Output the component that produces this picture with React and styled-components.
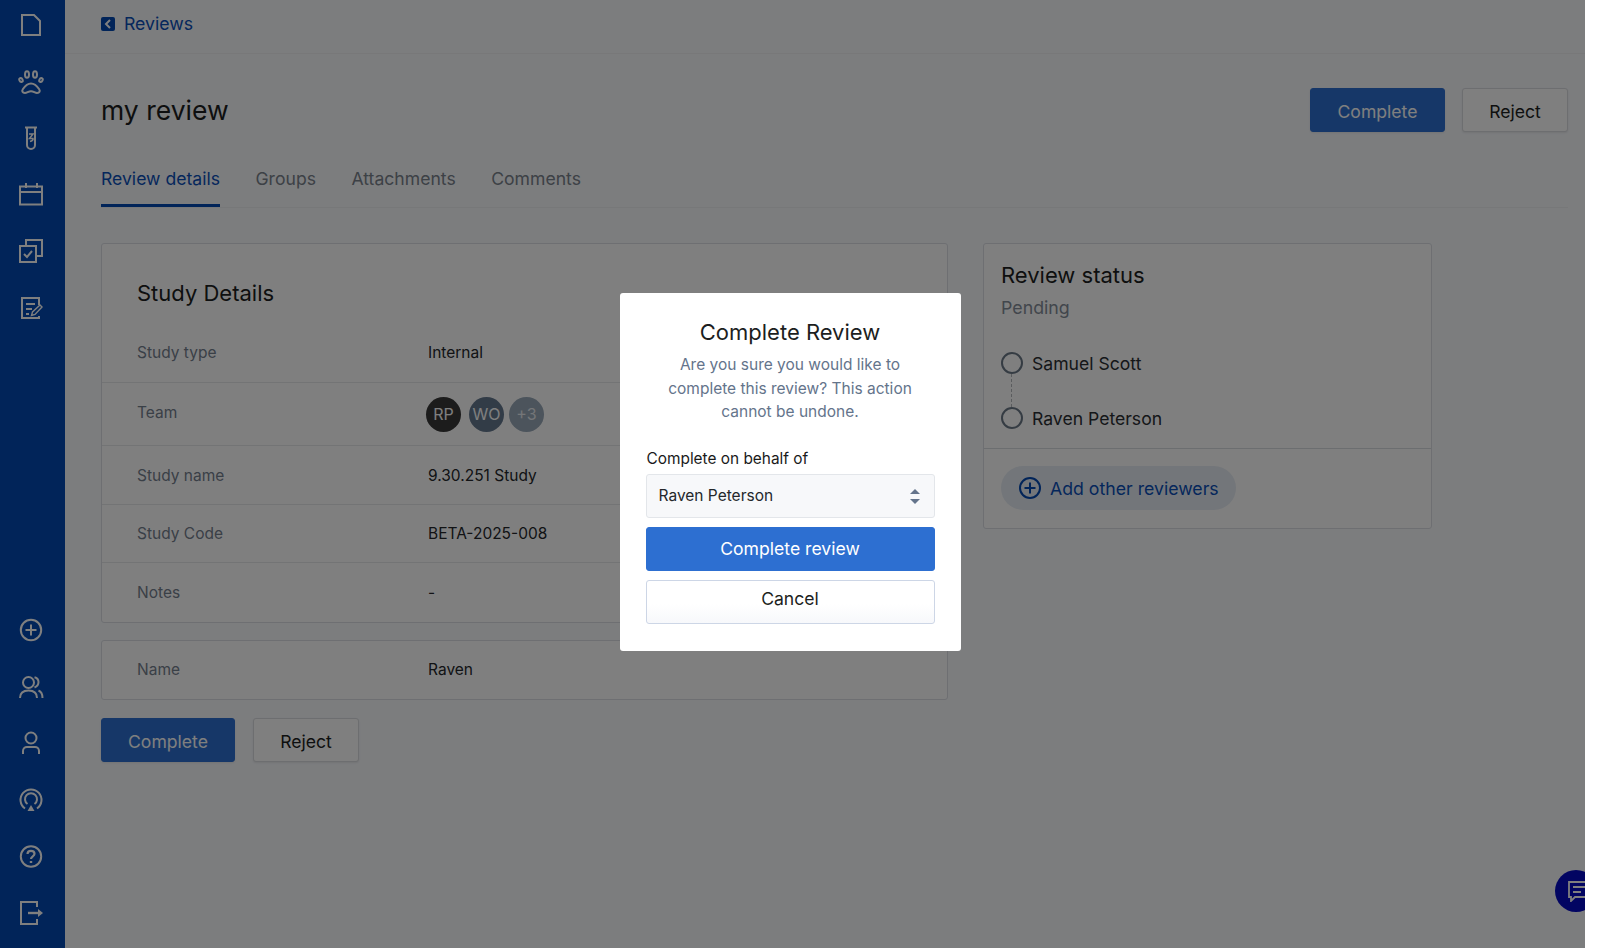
import React from 'react';
import styled, { createGlobalStyle } from 'styled-components';

const GlobalStyle = createGlobalStyle`
  html, body {
    margin: 0;
    padding: 0;
    height: 100%;
    overflow: hidden;
    background: #ffffff;
    font-family: 'Inter', 'Liberation Sans', sans-serif;
  }
  * {
    box-sizing: border-box;
  }
`;

const Shell = styled.div`
  position: relative;
  display: flex;
  width: 1585px;
  height: 948px;
  overflow: hidden;
  background: #f8fafd;
`;

const Sidebar = styled.nav`
  display: flex;
  flex-direction: column;
  justify-content: space-between;
  flex: 0 0 65px;
  padding: 13px 3px 23px 0;
  background: #0248b2;
`;

const NavGroup = styled.div`
  display: flex;
  flex-direction: column;
  align-items: center;
  gap: 32.5px;
`;

const NavIcon = styled.svg.attrs({ viewBox: '0 0 24 24', fill: 'none' })`
  display: block;
  width: 24px;
  height: 24px;
  color: #ffffff;
  stroke: currentColor;
  stroke-width: 2;
  overflow: visible;
`;

const Main = styled.main`
  flex: 1;
  min-width: 0;
`;

const TopBar = styled.div`
  display: flex;
  align-items: center;
  gap: 9px;
  height: 54px;
  padding: 0 0 6px 36px;
  border-bottom: 1px solid #f0f1f3;
  color: #0a4fb8;
  font-size: 17.7px;
`;

const BackIcon = styled.span`
  display: flex;
  align-items: center;
  justify-content: center;
  width: 14px;
  height: 14px;
  border-radius: 2px;
  background: #0248b2;
`;

const Content = styled.div`
  padding: 0 17px 0 36px;
`;

const TitleRow = styled.div`
  display: flex;
  align-items: center;
  justify-content: space-between;
  margin-top: 34px;
  height: 44px;
`;

const PageTitle = styled.h1`
  margin: 0;
  font-size: 26.5px;
  font-weight: 400;
  color: #1c1e21;
`;

const Actions = styled.div`
  display: flex;
  gap: 17px;
`;

const ActionButton = styled.button`
  width: ${(p) => p.$width}px;
  height: 44px;
  padding: 2px 0 0;
  border-radius: 3px;
  border: 1px solid ${(p) => (p.$primary ? '#2d6fd1' : '#dadce0')};
  background: ${(p) => (p.$primary ? '#2d6fd1' : '#ffffff')};
  color: ${(p) => (p.$primary ? '#ffffff' : '#1c1e21')};
  font-family: inherit;
  font-size: 17.6px;
  box-shadow: 0 1px 2px rgba(0, 0, 0, 0.08);
`;

const Tabs = styled.div`
  display: flex;
  gap: 35.5px;
  margin-top: 36px;
  border-bottom: 1px solid #eef0f2;
`;

const Tab = styled.div`
  height: 39px;
  line-height: 22px;
  font-size: 17.6px;
  color: ${(p) => (p.$active ? '#0a4fb8' : '#7a828c')};
  border-bottom: 3px solid ${(p) => (p.$active ? '#0248b2' : 'transparent')};
`;

const Columns = styled.div`
  display: grid;
  grid-template-columns: 847px 449px;
  gap: 35px;
  align-items: start;
  margin-top: 35px;
`;

const LeftColumn = styled.div`
  display: flex;
  flex-direction: column;
`;

const Card = styled.section`
  background: #ffffff;
  border: 1px solid #dcdfe4;
  border-radius: 3px;
`;

const CardHeading = styled.h2`
  margin: 0;
  padding: 34px 35px 0;
  height: 79px;
  font-size: 22px;
  line-height: 31px;
  font-weight: 400;
  color: #1c1e21;
`;

const DetailRow = styled.div`
  display: grid;
  grid-template-columns: 291px 1fr;
  align-items: center;
  height: ${(p) => p.$height}px;
  padding: 0 0 ${(p) => p.$lift || 0}px 35px;
  border-bottom: ${(p) => (p.$last ? 'none' : '1px solid #e6e8eb')};
  font-size: 15.5px;
`;

const Label = styled.div`
  color: #75808e;
`;

const TeamLabel = styled(Label)`
  margin-top: -4px;
`;

const Value = styled.div`
  color: #24272b;
`;

const Avatars = styled.div`
  display: flex;
  margin-left: -2px;
`;

const Avatar = styled.div`
  display: flex;
  align-items: center;
  justify-content: center;
  width: 35px;
  height: 35px;
  margin-right: ${(p) => p.$gap}px;
  border-radius: 50%;
  background: ${(p) => p.$color};
  color: ${(p) => (p.$muted ? '#e8ecf0' : '#ffffff')};
  font-size: 16px;
`;

const NameCard = styled(Card)`
  margin-top: 17px;
`;

const BottomActions = styled(Actions)`
  margin-top: 18px;
  gap: 18px;
`;

const StatusTop = styled.div`
  padding: 15px 17px 0;
  height: 205px;
  border-bottom: 1px solid #d9dce0;
`;

const StatusTitle = styled.h2`
  margin: 0;
  font-size: 22px;
  line-height: 32px;
  font-weight: 400;
  color: #1c1e21;
`;

const StatusText = styled.div`
  margin-top: 4px;
  font-size: 17.8px;
  line-height: 26px;
  color: #848d99;
`;

const ReviewerList = styled.div`
  display: flex;
  flex-direction: column;
  gap: 33px;
  margin-top: 31px;
`;

const Reviewer = styled.div`
  position: relative;
  display: flex;
  align-items: center;
  gap: 9px;
  height: 22px;
  font-size: 17.6px;
  color: #2b2e33;
`;

const Ring = styled.span`
  width: 22px;
  height: 22px;
  border-radius: 50%;
  border: 2px solid #6b7887;
`;

const Connector = styled.span`
  position: absolute;
  left: 10px;
  top: 22px;
  height: 33px;
  border-left: 1px dashed #b5b8bd;
`;

const StatusFooter = styled.div`
  padding: 17px 17px 18px;
`;

const AddPill = styled.div`
  display: flex;
  align-items: center;
  gap: 9px;
  width: 235px;
  height: 44px;
  padding-left: 18px;
  border-radius: 22px;
  background: #e7edf4;
  color: #0a4fb8;
  font-size: 17.7px;
`;

const ChatBubble = styled.div`
  position: absolute;
  left: 1555px;
  top: 870px;
  display: flex;
  align-items: center;
  padding: 1px 0 0 13px;
  width: 42px;
  height: 42px;
  border-radius: 50%;
  background: #050bc4;
`;

const Overlay = styled.div`
  position: absolute;
  inset: 0;
  display: flex;
  align-items: center;
  justify-content: center;
  padding: 0 5px 4px 0;
  background: rgba(0, 0, 0, 0.5);
`;

const Modal = styled.div`
  width: 341px;
  height: 358px;
  padding: 24px 26px 0;
  border-radius: 3px;
  background: #ffffff;
`;

const ModalTitle = styled.h3`
  margin: 0;
  font-size: 22px;
  line-height: 30px;
  font-weight: 400;
  text-align: center;
  color: #1c1e21;
`;

const ModalText = styled.p`
  margin: 6px 0 0;
  font-size: 15.5px;
  line-height: 23.5px;
  text-align: center;
  color: #64748b;
`;

const FieldLabel = styled.div`
  margin-top: 24px;
  padding-left: 1px;
  font-size: 15.4px;
  line-height: 22px;
  color: #1a1a1a;
`;

const SelectBox = styled.div`
  display: flex;
  align-items: center;
  justify-content: space-between;
  height: 44px;
  margin-top: 4px;
  padding: 0 13px 0 12px;
  border: 1px solid #e3e6ea;
  border-radius: 3px;
  background: #f7f8fa;
  font-size: 15.5px;
  color: #24272b;
`;

const ModalButton = styled.button`
  display: block;
  width: 100%;
  height: 44px;
  margin-top: 9px;
  padding: 0 0 ${(p) => (p.$primary ? 0 : 6)}px;
  border-radius: 3px;
  border: 1px solid ${(p) => (p.$primary ? '#2d6fd1' : '#cdd6e6')};
  background: ${(p) => (p.$primary ? '#2d6fd1' : 'linear-gradient(#ffffff 55%, #f7f8fb)')};
  color: ${(p) => (p.$primary ? '#ffffff' : '#1c1e21')};
  font-family: inherit;
  font-size: 17.6px;
`;

const ArrowIcon = styled.svg`
  display: block;
  width: 12px;
  height: 18px;
  fill: #64748b;
`;

const topNav = [
  <path key="file" d="M3 2H15L21 8V22H3Z" />,
  <g key="paw">
    <path d="M6 23C3.5 23 2.5 21.2 3.8 19.2C6 16 9 13.5 12 13.5C15 13.5 18 16 20.2 19.2C21.5 21.2 20.5 23 18 23C16 23 14.5 21.2 12 21.2C9.5 21.2 8 23 6 23Z" />
    <ellipse cx="8" cy="4.5" rx="2" ry="3.3" />
    <ellipse cx="16" cy="4.5" rx="2" ry="3.3" />
    <ellipse cx="2" cy="10" rx="1.6" ry="2.1" transform="rotate(-25 2 10)" />
    <ellipse cx="22" cy="10" rx="1.6" ry="2.1" transform="rotate(25 22 10)" />
  </g>,
  <g key="tube">
    <path d="M6 1.5H18M8 1.5V19A4 4 0 0 0 16 19V1.5" />
    <path d="M10 8H14L10.5 12.5H14C14.5 14 13 15 11 15.5" strokeWidth="1.5" />
  </g>,
  <g key="calendar">
    <path d="M1 3.5H23V21.5H1Z" />
    <path d="M1 9H23M7 0V5M18 0V5" />
  </g>,
  <g key="copy">
    <path d="M7 6V1H23V17H17" />
    <path d="M1 7H17V23H1Z" />
    <path d="M5 15L8 18L13 12" />
  </g>,
  <g key="note">
    <path d="M20 9V2H3V22H20V20" />
    <path d="M7 8H16M7 13H13M7 18H10" />
    <path d="M12.5 19.5L13.5 16L21 9L23 11L16 18.5Z" strokeWidth="1.4" />
  </g>,
];

const bottomNav = [
  <g key="plus">
    <circle cx="12" cy="11" r="10.2" />
    <path d="M12 5.5V16.5M6.5 11H17.5" />
  </g>,
  <g key="users">
    <circle cx="9.5" cy="7.5" r="5.5" />
    <path d="M1 23C1 18 4.5 15.5 9.5 15.5C14.5 15.5 18 18 18 23" />
    <path d="M15.5 2.2C18.5 3 19.5 5 19.5 7C19.5 9 18 11.5 15.5 12.5M19.5 15.5C22 16.5 23.5 19.5 23.5 23" />
  </g>,
  <g key="user">
    <circle cx="12" cy="6" r="5.5" />
    <path d="M4 22V19C4 16.5 6 15 8 15H16C18 15 20 16.5 20 19V22" />
  </g>,
  <g key="hub">
    <path d="M6 20.5A10.5 10.5 0 1 1 18 20.5" />
    <path d="M8.5 16A6 6 0 1 1 15.5 16" />
    <path d="M12 17L15.5 23H8.5Z" fill="currentColor" stroke="none" />
  </g>,
  <g key="help">
    <circle cx="12" cy="11.5" r="10.2" />
    <path d="M8.5 9C8.5 7 10 5.8 12 5.8C14 5.8 15.5 7 15.5 8.8C15.5 11.3 12 11.3 12 14" strokeWidth="2.2" />
    <path d="M12 16V18" strokeWidth="2.4" />
  </g>,
  <g key="logout">
    <path d="M18 6V1H2V23H18V18" />
    <path d="M9 12H19" strokeWidth="2.4" />
    <path d="M19 8L24 12L19 16Z" fill="currentColor" stroke="none" />
  </g>,
];

const details = [
  { label: 'Study type', value: 'Internal', height: 60 },
  { label: 'Team', height: 63 },
  { label: 'Study name', value: '9.30.251 Study', height: 59 },
  { label: 'Study Code', value: 'BETA-2025-008', height: 58 },
  { label: 'Notes', value: '-', height: 59, last: true },
];

const TeamAvatars = () => (
  <Avatars>
    <Avatar $color="#383838" $gap={8}>RP</Avatar>
    <Avatar $color="#64788f" $gap={5}>WO</Avatar>
    <Avatar $color="#98a8b8" $gap={0} $muted>+3</Avatar>
  </Avatars>
);

const App = () => (
  <>
    <GlobalStyle />
    <Shell>
      <Sidebar>
        <NavGroup>
          {topNav.map((icon) => (
            <NavIcon key={icon.key}>{icon}</NavIcon>
          ))}
        </NavGroup>
        <NavGroup>
          {bottomNav.map((icon) => (
            <NavIcon key={icon.key}>{icon}</NavIcon>
          ))}
        </NavGroup>
      </Sidebar>

      <Main>
        <TopBar>
          <BackIcon>
            <svg width="8" height="10" viewBox="0 0 8 10" fill="none" stroke="#ffffff" strokeWidth="2">
              <path d="M6 1L2 5L6 9" />
            </svg>
          </BackIcon>
          Reviews
        </TopBar>
        <Content>
          <TitleRow>
            <PageTitle>my review</PageTitle>
            <Actions>
              <ActionButton $primary $width={135}>Complete</ActionButton>
              <ActionButton $width={106}>Reject</ActionButton>
            </Actions>
          </TitleRow>

          <Tabs>
            <Tab $active>Review details</Tab>
            <Tab>Groups</Tab>
            <Tab>Attachments</Tab>
            <Tab>Comments</Tab>
          </Tabs>

          <Columns>
            <LeftColumn>
              <Card>
                <CardHeading>Study Details</CardHeading>
                {details.map((row) => (
                  <DetailRow key={row.label} $height={row.height} $last={row.last}>
                    {row.value ? <Label>{row.label}</Label> : <TeamLabel>{row.label}</TeamLabel>}
                    {row.value ? <Value>{row.value}</Value> : <TeamAvatars />}
                  </DetailRow>
                ))}
              </Card>
              <NameCard>
                <DetailRow $height={58} $lift={2} $last>
                  <Label>Name</Label>
                  <Value>Raven</Value>
                </DetailRow>
              </NameCard>
              <BottomActions>
                <ActionButton $primary $width={134}>Complete</ActionButton>
                <ActionButton $width={106}>Reject</ActionButton>
              </BottomActions>
            </LeftColumn>

            <Card>
              <StatusTop>
                <StatusTitle>Review status</StatusTitle>
                <StatusText>Pending</StatusText>
                <ReviewerList>
                  <Reviewer>
                    <Ring />
                    <Connector />
                    Samuel Scott
                  </Reviewer>
                  <Reviewer>
                    <Ring />
                    Raven Peterson
                  </Reviewer>
                </ReviewerList>
              </StatusTop>
              <StatusFooter>
                <AddPill>
                  <svg width="22" height="22" viewBox="0 0 22 22" fill="none" stroke="#0248b2" strokeWidth="2">
                    <circle cx="11" cy="11" r="10" />
                    <path d="M11 5.5V16.5M5.5 11H16.5" />
                  </svg>
                  Add other reviewers
                </AddPill>
              </StatusFooter>
            </Card>
          </Columns>
        </Content>
      </Main>

      <ChatBubble>
        <svg width="24" height="21" viewBox="0 0 24 21" fill="none" stroke="#ffffff" strokeWidth="1.8">
          <path d="M1 1H23V16H7L3 20V16H1Z" />
          <path d="M5 6H17M5 11H13" />
        </svg>
      </ChatBubble>

      <Overlay>
        <Modal>
          <ModalTitle>Complete Review</ModalTitle>
          <ModalText>
            Are you sure you would like to complete this review? This action cannot be undone.
          </ModalText>
          <FieldLabel>Complete on behalf of</FieldLabel>
          <SelectBox>
            Raven Peterson
            <ArrowIcon viewBox="0 0 12 18">
              <path d="M6 2L11 7H1Z" />
              <path d="M1 12H11L6 17Z" />
            </ArrowIcon>
          </SelectBox>
          <ModalButton $primary>Complete review</ModalButton>
          <ModalButton>Cancel</ModalButton>
        </Modal>
      </Overlay>
    </Shell>
  </>
);

export default App;
